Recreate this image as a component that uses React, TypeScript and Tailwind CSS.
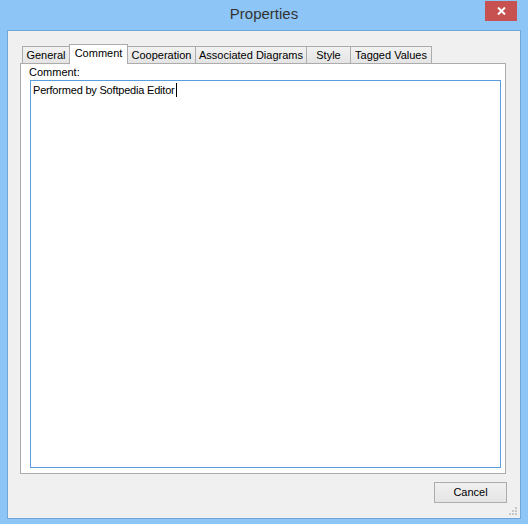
import React from "react";

const tabs = [
  { label: "General", w: "w-[48px]" },
  { label: "Comment", w: "w-[59px]", active: true },
  { label: "Cooperation", w: "w-[69px]" },
  { label: "Associated Diagrams", w: "w-[112px]" },
  { label: "Style", w: "w-[45px]" },
  { label: "Tagged Values", w: "w-[82px]" },
];

export default function App() {
  return (
    <div className="w-[528px] h-[524px] bg-[#8cc5f6] flex flex-col relative font-['Liberation_Sans',Arial,sans-serif] text-black overflow-hidden">
      {/* Title bar */}
      <div className="h-[30px] flex items-center justify-center relative">
        <span className="text-[15px] text-[#333333] -mt-[1px]">Properties</span>
        <div className="absolute right-[11px] top-[1px] w-[32px] h-[20px] bg-[#c75050] flex items-center justify-center">
          <svg width="9" height="8" viewBox="0 0 9 8">
            <path d="M1 0.5 L8 7.5 M8 0.5 L1 7.5" stroke="white" strokeWidth="2" />
          </svg>
        </div>
      </div>

      {/* Client area */}
      <div className="mx-[7px] mb-[5px] flex-1 border border-[#6ea7da] bg-[#f0f0f0] flex flex-col pt-[13px] pl-[12px] pr-[14px] relative">
        {/* Tab strip */}
        <div className="flex items-end h-[20px] pl-[2px] relative z-10 -mb-px">
          {tabs.map((t, i) =>
            t.active ? (
              <div
                key={t.label}
                className={`${t.w} h-[20px] -ml-px bg-white border-l border-t border-r border-[#acacac] text-[11px] leading-[13px] pt-[2px] text-center whitespace-nowrap`}
              >
                {t.label}
              </div>
            ) : (
              <div
                key={t.label}
                className={`${t.w} h-[17px] mb-[1px] ${i === 0 ? "" : "-ml-px"} bg-gradient-to-b from-[#f2f2f2] to-[#e4e4e4] border-l border-t border-r border-[#acacac] text-[11px] leading-[13px] pt-[2px] text-center whitespace-nowrap`}
              >
                {t.label}
              </div>
            )
          )}
        </div>

        {/* Panel */}
        <div className="h-[411px] border border-[#acacac] bg-white flex flex-col pl-[9px] pr-[4px] pb-[5px]">
          <div className="h-[16px] text-[11px] leading-[13px] pt-[2px] -ml-[1px]">Comment:</div>
          <div className="flex-1 border border-[#5b9ee0] pl-[2px] pt-[2px]">
            <div className="text-[11px] leading-[13px] tracking-[-0.2px] flex items-center">
              <span>Performed by Softpedia Editor</span>
              <span className="inline-block w-px h-[14px] bg-black ml-[1px]" />
            </div>
          </div>
        </div>

        {/* Button row */}
        <div className="flex justify-end mt-[8px] -mr-px">
          <div className="w-[73px] h-[21px] border border-[#adadad] bg-gradient-to-b from-[#f0f0f0] to-[#e5e5e5] flex items-center justify-center text-[11px]">
            Cancel
          </div>
        </div>

        {/* Size grip */}
        <svg className="absolute right-[2px] bottom-[2px]" width="9" height="9" viewBox="0 0 9 9">
          <rect x="6" y="0" width="2" height="2" fill="#c6c6c6" />
          <rect x="3" y="3" width="2" height="2" fill="#c6c6c6" />
          <rect x="6" y="3" width="2" height="2" fill="#c6c6c6" />
          <rect x="0" y="6" width="2" height="2" fill="#c6c6c6" />
          <rect x="3" y="6" width="2" height="2" fill="#c6c6c6" />
          <rect x="6" y="6" width="2" height="2" fill="#c6c6c6" />
        </svg>
      </div>
    </div>
  );
}
